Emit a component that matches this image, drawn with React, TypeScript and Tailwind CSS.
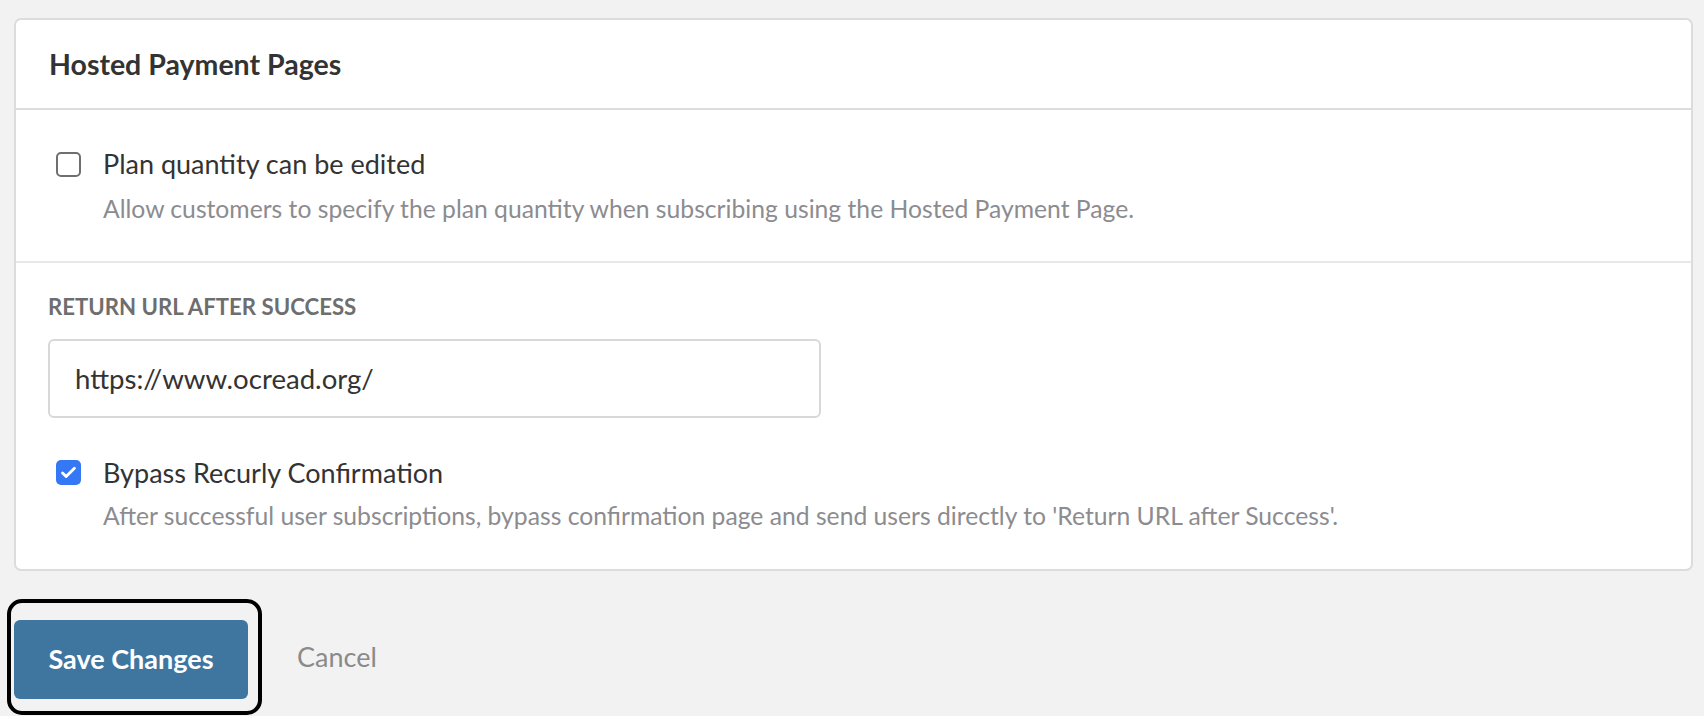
import { useState } from "react";

function Checkbox({ checked, onChange, offset }: { checked: boolean; onChange: () => void; offset: string }) {
  return (
    <button
      type="button"
      onClick={onChange}
      className={
        checked
          ? `${offset} flex h-[25px] w-[25px] shrink-0 items-center justify-center rounded-[5px] bg-[#3478f6]`
          : `${offset} h-[25px] w-[25px] shrink-0 rounded-[5px] border-[2.5px] border-[#6f6f6f] bg-white`
      }
    >
      {checked && (
        <svg viewBox="0 0 24 24" className="h-[19px] w-[19px]" fill="none">
          <path d="M4.5 12.5l4.5 4.5L19.5 6.5" stroke="white" strokeWidth="3.6" strokeLinecap="round" strokeLinejoin="round" />
        </svg>
      )}
    </button>
  );
}

export default function App() {
  const [editable, setEditable] = useState(false);
  const [bypass, setBypass] = useState(true);
  const [url, setUrl] = useState("https://www.ocread.org/");

  return (
    <div className="min-h-screen bg-[#f2f2f2] pl-[14px] pr-[11px] pt-[18px] font-['Lato',sans-serif]">
      {/* Card */}
      <div className="rounded-[7px] border-2 border-[#dcdcdc] bg-white">
        <div className="flex h-[90px] items-center border-b-2 border-[#dcdcdc] px-[33px]">
          <h2 className="text-[28.5px] font-bold leading-none text-[#333333]">Hosted Payment Pages</h2>
        </div>

        <div className="border-b-2 border-[#e8e8e8] px-[40px] pb-[36px] pt-[37px]">
          <div className="flex gap-[22px]">
            <Checkbox offset="mt-[5px]" checked={editable} onChange={() => setEditable(!editable)} />
            <div>
              <div className="text-[27px] leading-[34px] text-[#333333]">Plan quantity can be edited</div>
              <div className="mt-[12px] text-[24.7px] leading-[32px] text-[#8c8c90]">
                Allow customers to specify the plan quantity when subscribing using the Hosted Payment Page.
              </div>
            </div>
          </div>
        </div>

        <div className="px-[32px] pb-[37px] pt-[31px]">
          <label className="block text-[22.2px] font-bold uppercase leading-[26px] text-[#6e6e6e]">
            Return URL after Success
          </label>
          <input
            value={url}
            onChange={(e) => setUrl(e.target.value)}
            className="mt-[19px] block h-[79px] w-[773px] rounded-[6px] border-2 border-[#d8d8d8] px-[25px] text-[27.6px] text-[#333333] outline-none"
          />
          <div className="mt-[38px] flex gap-[22px] pl-[8px]">
            <Checkbox offset="mt-[4px]" checked={bypass} onChange={() => setBypass(!bypass)} />
            <div>
              <div className="text-[27px] leading-[34px] text-[#333333]">Bypass Recurly Confirmation</div>
              <div className="mt-[10px] text-[24.7px] leading-[32px] text-[#8c8c90]">
                After successful user subscriptions, bypass confirmation page and send users directly to 'Return URL after Success'.
              </div>
            </div>
          </div>
        </div>
      </div>

      {/* Actions */}
      <div className="mt-[28px] flex items-center gap-[35px]">
        <div className="-ml-[7px] rounded-[15px] border-4 border-black pb-[12px] pl-[3px] pr-[10px] pt-[17px]">
          <button className="h-[79px] w-[234px] rounded-[6px] bg-[#3e76a0] text-[27px] font-bold text-white">
            Save Changes
          </button>
        </div>
        <button className="text-[27px] text-[#8a8a8a]">Cancel</button>
      </div>
    </div>
  );
}
